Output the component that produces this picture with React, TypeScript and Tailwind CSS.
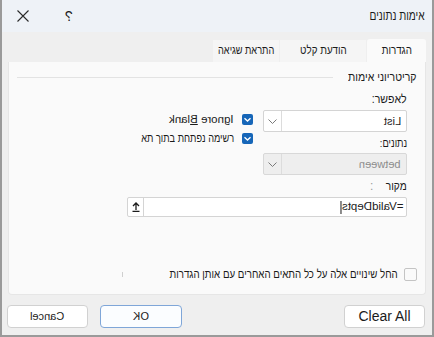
import React from "react"

const Mirror = ({ children, className = "" }: { children: React.ReactNode; className?: string }) => (
  <span dir="ltr" className={`inline-block -scale-x-100 ${className}`}>
    {children}
  </span>
)

// Hebrew labels in the reference are set in a narrow face; squeeze Liberation Sans to match
const Heb = ({ children, className = "scale-x-[0.82] origin-right" }: { children: React.ReactNode; className?: string }) => (
  <span className={`inline-block whitespace-nowrap ${className}`}>{children}</span>
)

const Chevron = () => (
  <svg width="9" height="5" viewBox="0 0 9 5">
    <path d="M0.5 0.5 L4.5 4.5 L8.5 0.5" stroke="#7a7a7a" fill="none" strokeWidth="1" />
  </svg>
)

const Select = ({ value, disabled, className = "" }: { value: string; disabled?: boolean; className?: string }) => (
  <div
    className={`h-[22px] flex items-stretch border rounded-[2px] ${
      disabled ? "bg-[#eeeeee] border-[#d8d8d8] text-[#8c8c8c]" : "bg-white border-[#d4d4d4] text-[#1b1b1b]"
    } ${className}`}
  >
    <div className="flex-1 flex items-center pr-[5px] text-[11px]">
      <Mirror>{value}</Mirror>
    </div>
    <div className="w-[18px] border-r border-[#dcdcdc] flex items-center justify-center">
      <Chevron />
    </div>
  </div>
)

const CheckBox = ({ children }: { children: React.ReactNode }) => (
  <div className="h-[19px] flex items-center gap-[8px]">
    <div className="w-[11px] h-[11px] shrink-0 rounded-[2px] bg-[#1666b8] flex items-center justify-center">
      <svg width="9" height="9" viewBox="0 0 9 9">
        <path d="M1.5 3.2 L4.5 6 L7.5 3.2" stroke="white" strokeWidth="1.4" fill="none" />
      </svg>
    </div>
    <span className="text-[11.5px] leading-none whitespace-nowrap">{children}</span>
  </div>
)

export default function App() {
  return (
    <div
      dir="rtl"
      className="w-[434px] h-[337px] flex flex-col bg-[#efefef] border-x-2 border-b-2 border-[#9a9a9a] font-['Liberation_Sans',sans-serif] text-[#1b1b1b] overflow-hidden"
    >
      {/* title bar */}
      <div className="h-[32px] shrink-0 bg-[#eef2f7] flex items-center justify-between pr-[7px] pl-[15px]">
        <Heb className="text-[13px] scale-x-[0.78] origin-right">אימות נתונים</Heb>
        <div className="flex items-center gap-[36px]">
          <Mirror className="text-[14px]">?</Mirror>
          <svg width="12" height="12" viewBox="0 0 12 12">
            <path d="M0.5 0.5 L11.5 11.5 M11.5 0.5 L0.5 11.5" stroke="#2a2a2a" strokeWidth="1.1" />
          </svg>
        </div>
      </div>

      {/* tabs */}
      <div className="h-[30px] shrink-0 mx-[6px] flex items-end gap-px text-[11.5px]">
        <div className="w-[59px] h-[23px] bg-[#fafafa] rounded-t-[3px] flex items-center justify-center">
          <Heb className="scale-x-[0.85]">הגדרות</Heb>
        </div>
        <div className="w-[86px] h-[22px] bg-[#f5f5f5] flex items-center justify-center">
          <Heb className="scale-x-[0.85]">הודעת קלט</Heb>
        </div>
        <div className="w-[66px] h-[22px] bg-[#f5f5f5] flex items-center justify-center">
          <Heb className="scale-x-[0.8]">התראת שגיאה</Heb>
        </div>
      </div>

      {/* settings panel */}
      <div className="mx-[6px] h-[233px] shrink-0 bg-[#fafafa] border-x border-b border-[#e6e6e6] rounded-b-[4px] flex flex-col text-[12px]">
        <div className="h-[16px] mt-[7px] px-[8px] flex items-center">
          <Heb className="text-[12.5px] scale-x-[0.84] origin-right -ml-[13px]">קריטריוני אימות</Heb>
          <div className="flex-1 h-px bg-[#e3e3e3] mr-[15px]" />
        </div>

        <div className="pr-[18px] mt-[6px] flex flex-col items-start">
          <div className="flex gap-[10px]">
            <div className="w-[144px] flex flex-col">
              <div className="h-[16px] leading-[16px]">
                <Heb className="scale-x-[0.88] origin-right">לאפשר:</Heb>
              </div>
              <Select value="List" className="mt-[3px]" />
              <div className="h-[16px] leading-[16px] mt-[3px] text-[11px]">
                <Heb className="scale-x-[0.85] origin-right">נתונים:</Heb>
              </div>
              <Select value="between" disabled className="mt-[2px]" />
            </div>
            <div className="pt-[19px] flex flex-col">
              <CheckBox>
                <Mirror>
                  Ignore <span className="underline">B</span>lank
                </Mirror>
              </CheckBox>
              <CheckBox>
                <Heb className="scale-x-[0.8] origin-right">רשימה נפתחת בתוך תא</Heb>
              </CheckBox>
            </div>
          </div>

          <div className="h-[16px] leading-[16px] mt-[3px] flex items-center gap-[9px]">
            <Heb className="scale-x-[0.85] origin-right">מקור</Heb>
            <span className="text-[#9a9a9a]">:</span>
          </div>
          <div className="mt-[3px] w-[280px] h-[20px] bg-white border border-[#d4d4d4] rounded-[2px] flex items-stretch">
            <div className="flex-1 flex items-center pr-[3px] text-[11.5px]">
              <span dir="ltr" className="inline-flex items-center -scale-x-100">
                =ValidDepts
                <span className="w-px h-[13px] bg-[#1b1b1b] ml-px" />
              </span>
            </div>
            <div className="w-[16px] border-r border-[#d4d4d4] flex items-center justify-center">
              <svg width="8" height="10" viewBox="0 0 8 10">
                <path d="M4 1 L4 8 M1 4 L4 1 L7 4 M0.5 9.5 L7.5 9.5" stroke="#1b1b1b" strokeWidth="1.3" fill="none" />
              </svg>
            </div>
          </div>
        </div>

        <div className="mt-auto pb-[11px] pr-[8px] flex items-center gap-[6px]">
          <div className="w-[13px] h-[13px] shrink-0 rounded-[2px] border border-[#c4c4c4] bg-[#fafafa]" />
          <Heb className="scale-x-[0.81] origin-right -ml-[54px]">החל שינויים אלה על כל התאים האחרים עם אותן הגדרות</Heb>
          <div className="mr-[41px] w-px h-[5px] bg-[#cfcfcf]" />
        </div>
      </div>

      {/* buttons */}
      <div className="flex-1 flex items-center justify-between pr-[7px] pl-[5px] pt-[2px]">
        <button className="w-[81px] h-[23px] bg-white border border-[#d1d1d1] rounded-[4px] text-[14px]">Clear All</button>
        <div className="flex gap-[12px]">
          <button className="w-[82px] h-[23px] bg-[#fbfdff] border border-[#7fa6d8] rounded-[4px] text-[11px]">
            <Mirror>OK</Mirror>
          </button>
          <button className="w-[81px] h-[23px] bg-white border border-[#d1d1d1] rounded-[4px] text-[11px]">
            <Mirror>Cancel</Mirror>
          </button>
        </div>
      </div>
    </div>
  )
}
